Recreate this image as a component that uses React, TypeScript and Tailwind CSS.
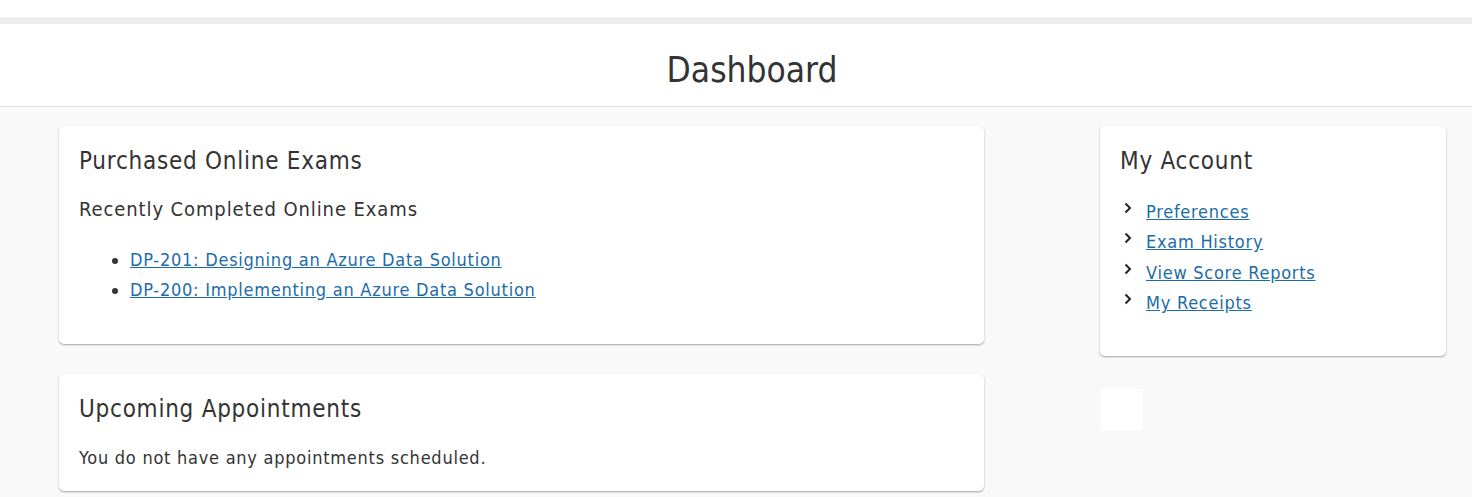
const font = { fontFamily: 'Tahoma, "DejaVu Sans Condensed", "DejaVu Sans", sans-serif' };

const exams = [
  "DP-201: Designing an Azure Data Solution",
  "DP-200: Implementing an Azure Data Solution",
];

const accountLinks = ["Preferences", "Exam History", "View Score Reports", "My Receipts"];

const Card = ({ className, children }: { className?: string; children: React.ReactNode }) => (
  <div className={`rounded-[5px] bg-white shadow-[0_1px_2px_rgba(0,0,0,0.35)] px-5 ${className ?? ""}`}>
    {children}
  </div>
);

const Chevron = () => (
  <svg width="8" height="12" viewBox="0 0 8 12" className="shrink-0 relative top-[-4px]">
    <path d="M1.5 1.5 L6 6 L1.5 10.5" fill="none" stroke="#222" strokeWidth="2" />
  </svg>
);

export default function App() {
  return (
    <div className="min-h-[497px] bg-[#f9f9f9] text-[#333] tracking-[0.75px]" style={font}>
      <div className="h-[17px] bg-white" />
      <div className="h-[7px] bg-[#ececec] border-t border-[#f4f4f4]" />
      <div className="h-[83px] bg-white border-b border-[#e2e2e2] flex items-center justify-center">
        <h1 className="text-[35px] leading-none tracking-normal pt-[10px] pl-[32px]">Dashboard</h1>
      </div>
      <div className="flex gap-[116px] pl-[59px] pt-[19px]">
        <div className="w-[925px] flex flex-col gap-[30px]">
          <Card className="h-[218px] pt-[20px]">
            <h2 className="text-[24px] leading-[30px]">Purchased Online Exams</h2>
            <h3 className="text-[20px] leading-[26px] mt-[20px] tracking-[0.9px]">Recently Completed Online Exams</h3>
            <ul className="list-disc pl-[51px] mt-[23px] text-[18px] leading-[30px]">
              {exams.map((e, i) => (
                <li key={i}>
                  <a href="#" className="text-[#1b6ca8] underline">{e}</a>
                </li>
              ))}
            </ul>
          </Card>
          <Card className="h-[117px] pt-[20px]">
            <h2 className="text-[24px] leading-[30px]">Upcoming Appointments</h2>
            <p className="text-[18px] leading-[26px] mt-[21px]">You do not have any appointments scheduled.</p>
          </Card>
        </div>
        <div className="w-[346px] flex flex-col">
          <Card className="h-[230px] pt-[20px]">
            <h2 className="text-[24px] leading-[30px]">My Account</h2>
            <ul className="mt-[21px] text-[18px] leading-[30.4px]">
              {accountLinks.map((l, i) => (
                <li key={i} className="flex items-baseline gap-[14px] pl-1">
                  <Chevron />
                  <a href="#" className="text-[#1b6ca8] underline">{l}</a>
                </li>
              ))}
            </ul>
          </Card>
          <div className="w-[41px] h-[41px] bg-white mt-[33px] ml-px" />
        </div>
      </div>
    </div>
  );
}
